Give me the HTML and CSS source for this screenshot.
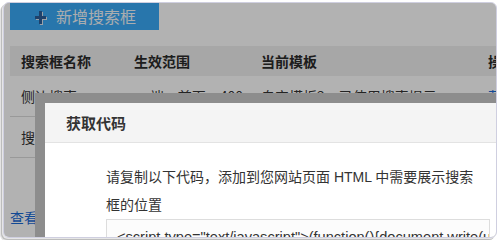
FILE: index.html
```html
<!DOCTYPE html>
<html lang="zh-CN">
<head>
<meta charset="utf-8">
<title>获取代码</title>
<link rel="stylesheet" href="styles.css">
</head>
<body>
<div class="frame">
  <div class="page">
    <button class="add-btn" type="button">
      <svg class="plus" width="11" height="14" viewBox="0 0 11 14" aria-hidden="true">
        <path d="M4 1h3v5h4v3H7v5H4V9H0V6h4z" fill="#2b5d9a"/>
      </svg>
      <span>新增搜索框</span>
    </button>
    <div class="table">
      <div class="row head">
        <div class="cell">搜索框名称</div>
        <div class="cell">生效范围</div>
        <div class="cell">当前模板</div>
        <div class="cell">操作</div>
      </div>
      <div class="row">
        <div class="cell">侧边搜索</div>
        <div class="cell">pc端：首页，400</div>
        <div class="cell">自定模板2　已使用搜索提示</div>
        <div class="cell"><a class="link" href="#">获取代码</a></div>
      </div>
      <div class="row">
        <div class="cell">搜索页</div>
        <div class="cell">pc端：全部页面</div>
        <div class="cell">默认模板</div>
        <div class="cell"><a class="link" href="#">获取代码</a></div>
      </div>
    </div>
    <a class="help link" href="#">查看搜索框使用帮助</a>
  </div>
  <div class="overlay"></div>
  <div class="dialog">
    <div class="dialog-head">获取代码</div>
    <div class="dialog-body">
      <p class="desc">请复制以下代码，添加到您网站页面 HTML 中需要展示搜索框的位置</p>
      <div class="code">&lt;script type="text/javascript"&gt;(function(){document.write(unescape('%3Cdiv id=%22bdcs%22%3E%3C/div%3E'));})();&lt;/script&gt;</div>
    </div>
  </div>
</div>
</body>
</html>
```
FILE: styles.css
```css
html, body {
  margin: 0;
  padding: 0;
  background: #ffffff;
  width: 500px;
  height: 240px;
  overflow: hidden;
}

body {
  font-family: "Liberation Sans", "Noto Sans CJK SC", sans-serif;
  color: #333;
}

.frame {
  position: relative;
  margin: 2px 3px 0 3px;
  height: 234px;
  border: 1px solid #cfcfe0;
  border-radius: 6px;
  overflow: hidden;
  background: #fff;
  box-shadow: -1px 1px 0 #e6e6e6, -2px 2px 0 #bdbdbd, -3px 3px 0 #e4e4e4;
}

.page {
  padding-left: 6px;
}

.add-btn {
  display: flex;
  align-items: center;
  gap: 10px;
  width: 149px;
  height: 27px;
  padding: 0 0 0 25px;
  margin: 0;
  border: 0;
  background: #3aa9f6;
  color: #f4f8fb;
  font-family: "Noto Sans CJK SC", sans-serif;
  font-size: 16px;
  line-height: 27px;
}

.plus {
  display: block;
  filter: drop-shadow(1px 1px 0 #dfe8f2);
}

.table {
  margin-top: 16px;
  width: 560px;
}

.row {
  display: grid;
  grid-template-columns: 113px 127px 227px 1fr;
  height: 40px;
  align-items: center;
  border-bottom: 1px solid #dcdcdc;
  font-size: 14px;
  font-family: "Noto Sans CJK SC", sans-serif;
}

.row.head {
  height: 30px;
  background: #f0f0f0;
  border-bottom: 0;
  font-weight: bold;
  color: #2a2a2a;
}

.cell {
  padding-left: 11px;
  white-space: nowrap;
  overflow: hidden;
}

.link {
  color: #1a69d4;
  text-decoration: none;
}

.help {
  display: inline-block;
  margin-top: 49px;
  font-size: 14px;
  font-family: "Noto Sans CJK SC", sans-serif;
}

.overlay {
  position: absolute;
  inset: 0;
  background: rgba(0, 0, 0, 0.3);
}

.dialog {
  position: absolute;
  left: 31px;
  top: 90px;
  width: 600px;
  height: 300px;
  border: 10px solid #8d8d8d;
  background: #ffffff;
}

.dialog-head {
  height: 39px;
  line-height: 39px;
  padding-left: 21px;
  background: #f4f4f4;
  border-bottom: 1px solid #e3e3e3;
  font-family: "Noto Sans CJK SC", sans-serif;
  font-size: 15px;
  font-weight: bold;
  color: #333;
}

.dialog-body {
  padding: 20px 0 0 61px;
}

.desc {
  margin: 0;
  width: 375px;
  font-size: 14px;
  line-height: 28px;
  color: #333;
}

.code {
  width: 362px;
  padding: 7px 10px;
  border: 1px solid #dddddd;
  background: #fcfcfc;
  font-size: 14.6px;
  line-height: 20px;
  color: #333;
  white-space: nowrap;
  overflow: hidden;
}
```
